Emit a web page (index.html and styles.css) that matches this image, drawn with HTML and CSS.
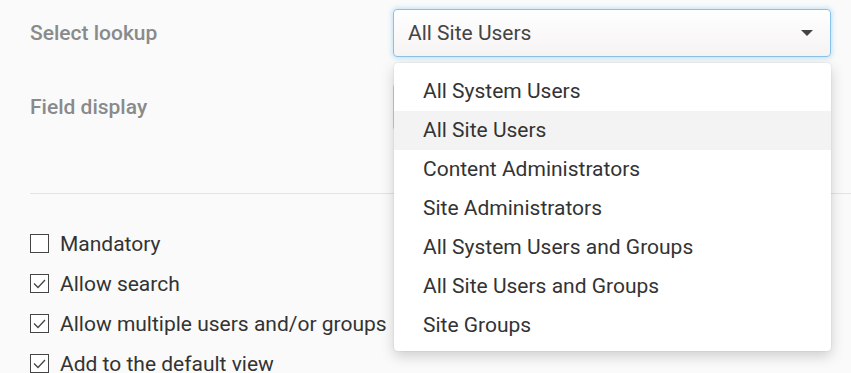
FILE: index.html
```html
<!DOCTYPE html>
<html>
<head>
<meta charset="utf-8">
<link rel="stylesheet" href="styles.css">
</head>
<body>
<div class="form">
  <div class="row row-lookup">
    <div class="label">Select lookup</div>
    <div class="field">
      <div class="select select-open">
        <span class="value">All Site Users</span>
        <span class="arrow"></span>
      </div>
      <ul class="menu">
        <li>All System Users</li>
        <li class="active">All Site Users</li>
        <li>Content Administrators</li>
        <li>Site Administrators</li>
        <li>All System Users and Groups</li>
        <li>All Site Users and Groups</li>
        <li>Site Groups</li>
      </ul>
    </div>
  </div>
  <div class="row row-display">
    <div class="label">Field display</div>
    <div class="field">
      <div class="select"></div>
    </div>
  </div>
  <hr class="divider">
  <div class="checks">
    <label class="check"><span class="box"></span>Mandatory</label>
    <label class="check"><span class="box on"><svg viewBox="0 0 19 19" width="19" height="19"><path d="M4 9.5 L8 13.5 L15 6" fill="none" stroke="#444" stroke-width="1.3"/></svg></span>Allow search</label>
    <label class="check"><span class="box on"><svg viewBox="0 0 19 19" width="19" height="19"><path d="M4 9.5 L8 13.5 L15 6" fill="none" stroke="#444" stroke-width="1.3"/></svg></span>Allow multiple users and/or groups</label>
    <label class="check"><span class="box on"><svg viewBox="0 0 19 19" width="19" height="19"><path d="M4 9.5 L8 13.5 L15 6" fill="none" stroke="#444" stroke-width="1.3"/></svg></span>Add to the default view</label>
  </div>
</div>
</body>
</html>
```
FILE: styles.css
```css
html, body {
  margin: 0;
  padding: 0;
  background: #fafafa;
  font-family: Roboto, "Liberation Sans", sans-serif;
  overflow: hidden;
  height: 373px;
}
.form {
  padding: 9px 0 0 30px;
}
.row {
  display: grid;
  grid-template-columns: 363px 438px;
  align-items: center;
}
.row-display {
  margin-top: 26px;
}
.label {
  font-size: 21px;
  font-weight: 500;
  color: #8a8a8a;
}
.field {
  position: relative;
}
.select {
  box-sizing: border-box;
  height: 48px;
  border: 1px solid #cfcfcf;
  border-radius: 4px;
  background: #fff;
  display: flex;
  align-items: center;
  padding: 0 17px 0 14px;
}
.select-open {
  border-color: #88c2e6;
  box-shadow: 0 0 5px 1px rgba(120, 190, 235, 0.45);
  background: linear-gradient(#ffffff, #f6f3f3);
}
.value {
  flex: 1;
  font-size: 21px;
  color: #444;
}
.arrow {
  width: 0;
  height: 0;
  border-left: 6px solid transparent;
  border-right: 6px solid transparent;
  border-top: 6px solid #444;
}
.menu {
  position: absolute;
  z-index: 5;
  left: 1px;
  right: 0;
  top: 54px;
  margin: 0;
  padding: 9px 0 6px;
  list-style: none;
  background: #fff;
  border-radius: 4px;
  box-shadow: 0 5px 14px rgba(0, 0, 0, 0.18), 0 0 2px rgba(0, 0, 0, 0.12);
}
.menu li {
  height: 39px;
  line-height: 39px;
  padding-left: 29px;
  font-size: 21px;
  color: #333;
}
.menu li.active {
  background: #f3f3f3;
}
.divider {
  border: 0;
  border-top: 1px solid #e3e3e3;
  margin: 62px 0 0 0;
}
.checks {
  display: flex;
  flex-direction: column;
  gap: 21px;
  margin-top: 40px;
}
.check {
  display: flex;
  align-items: center;
  gap: 11px;
  height: 19px;
  font-size: 21px;
  color: #333;
}
.box {
  box-sizing: border-box;
  width: 19px;
  height: 19px;
  border: 1px solid #444;
  background: #fff;
  position: relative;
  flex: none;
}
.box svg {
  position: absolute;
  left: -1px;
  top: -1px;
}
```
